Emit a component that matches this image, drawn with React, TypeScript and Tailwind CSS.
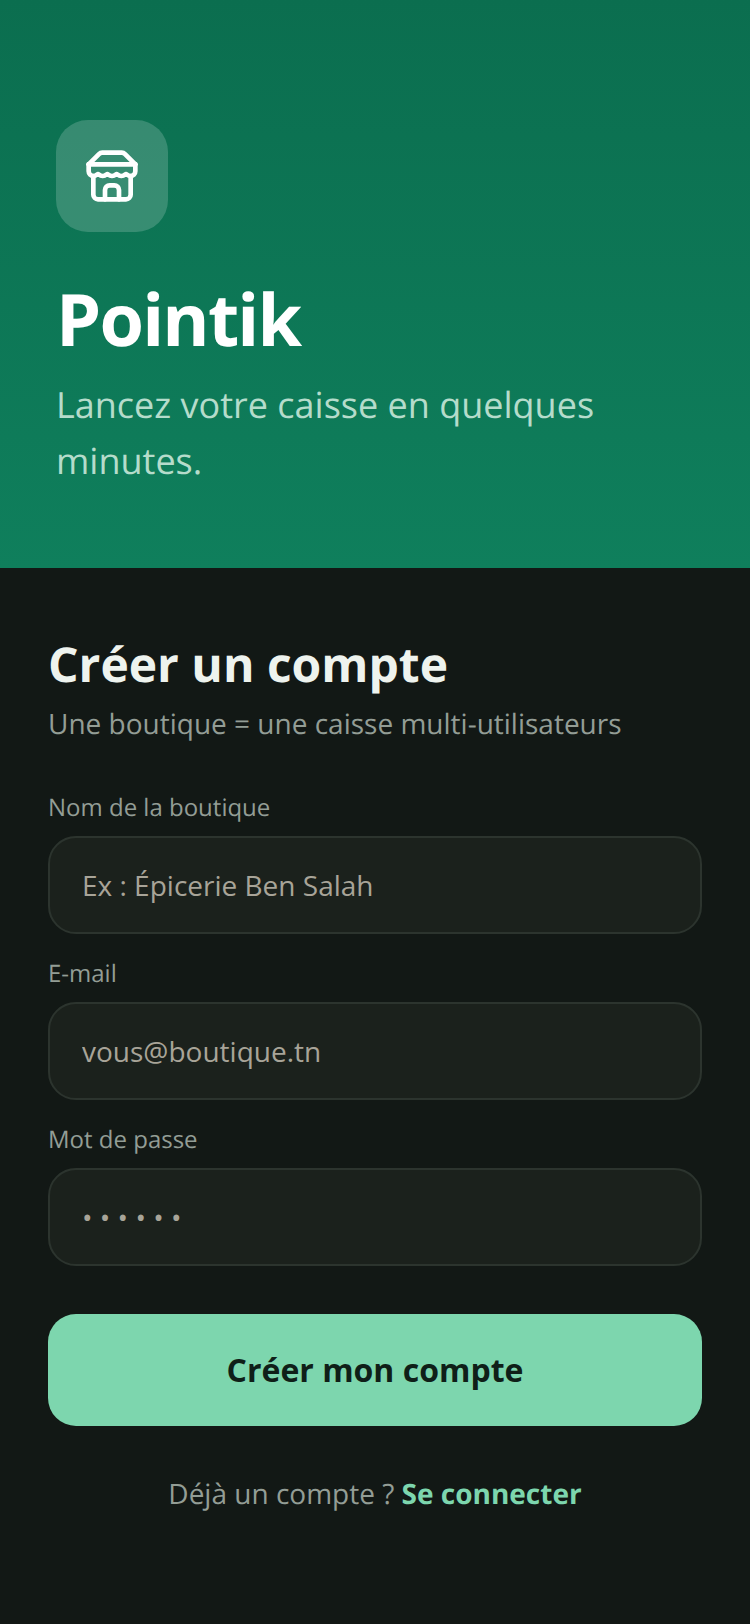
const fields = [
  { label: 'Nom de la boutique', placeholder: 'Ex : Épicerie Ben Salah' },
  { label: 'E-mail', placeholder: 'vous@boutique.tn' },
  { label: 'Mot de passe', placeholder: '• • • • • •' },
];

function StoreIcon() {
  return (
    <svg width="56" height="56" viewBox="0 0 24 24" fill="none" stroke="currentColor" strokeWidth="2" strokeLinecap="round" strokeLinejoin="round">
      <path d="m2 7 4.41-4.41A2 2 0 0 1 7.83 2h8.34a2 2 0 0 1 1.42.59L22 7" />
      <path d="M4 12v8a2 2 0 0 0 2 2h12a2 2 0 0 0 2-2v-8" />
      <path d="M15 22v-4a2 2 0 0 0-2-2h-2a2 2 0 0 0-2 2v4" />
      <path d="M2 7h20" />
      <path d="M22 7v3a2 2 0 0 1-2 2a2.7 2.7 0 0 1-1.59-.63.7.7 0 0 0-.82 0A2.7 2.7 0 0 1 16 12a2.7 2.7 0 0 1-1.59-.63.7.7 0 0 0-.82 0A2.7 2.7 0 0 1 12 12a2.7 2.7 0 0 1-1.59-.63.7.7 0 0 0-.82 0A2.7 2.7 0 0 1 8 12a2.7 2.7 0 0 1-1.59-.63.7.7 0 0 0-.82 0A2.7 2.7 0 0 1 4 12a2 2 0 0 1-2-2V7" />
    </svg>
  );
}

export default function App() {
  return (
    <div className="min-h-[1624px] flex flex-col bg-[#121815] font-['Open_Sans',sans-serif] antialiased [text-rendering:geometricPrecision]">
      {/* Green header */}
      <header className="h-[568px] px-14 pt-[120px] bg-gradient-to-b from-[#0b6e4f] to-[#0f7f5c]">
        <div className="w-28 h-28 rounded-[32px] bg-white/[0.18] flex items-center justify-center text-white">
          <StoreIcon />
        </div>
        <h1 className="mt-[43px] text-[72px] leading-[88px] font-bold tracking-[-0.025em] text-white">Pointik</h1>
        <p className="mt-[14px] text-[36px] leading-[56px] text-[#b5dccb]">
          Lancez votre caisse en quelques minutes.
        </p>
      </header>

      {/* Form */}
      <main className="flex-grow px-12 pt-[67px]">
        <h2 className="text-[48px] leading-[60px] font-bold text-[#eef3ee]">Créer un compte</h2>
        <p className="mt-[9px] text-[28px] leading-[40px] text-[#939d95]">
          Une boutique = une caisse multi-utilisateurs
        </p>

        <div className="mt-[47px]">
          {fields.map(field => (
            <div key={field.label} className="mb-[23px]">
              <label className="block mb-[11px] text-[24px] leading-[34px] text-[#939d95]">{field.label}</label>
              <input
                type="text"
                placeholder={field.placeholder}
                className="w-full h-[98px] px-8 rounded-[28px] border-2 border-[#2c342e] bg-[#1b211c] text-[28px] text-[#eef3ee] outline-none placeholder:text-[#a8a498]"
              />
            </div>
          ))}
        </div>

        <button className="mt-[25px] w-full h-28 rounded-[28px] bg-[#7dd6ae] text-[32px] font-bold text-[#0f1f18]">
          Créer mon compte
        </button>

        <p className="mt-[48px] text-center text-[28px] leading-[40px] text-[#939d95]">
          Déjà un compte ? <span className="font-bold text-[#7dd6ae]">Se connecter</span>
        </p>
      </main>
    </div>
  );
}
